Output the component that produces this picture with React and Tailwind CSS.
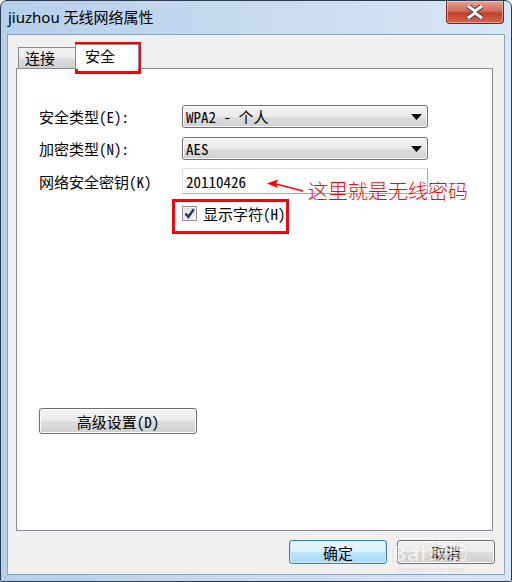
import React from 'react';

const cjk = "font-['Noto_Sans_Mono_CJK_SC','Noto_Sans_CJK_SC',monospace]";
const btnGray =
  'border border-[#707070] rounded-[3px] bg-[linear-gradient(to_bottom,#f2f2f2_0%,#ebebeb_50%,#dddddd_51%,#cfcfcf_100%)] shadow-[inset_0_0_0_1px_#fcfcfc]';

function Dropdown({ value }) {
  return (
    <div className={`w-[246px] h-[23px] flex items-center justify-between pl-[3px] pr-[5px] ${btnGray}`}>
      <span className="text-[15px] leading-none text-black">{value}</span>
      <svg width="11" height="6" viewBox="0 0 11 6">
        <path d="M0 0 H11 L5.5 6 Z" fill="#000" />
      </svg>
    </div>
  );
}

function Row({ label, children }) {
  return (
    <div className="flex items-center">
      <div className="w-[143px] text-[15px] leading-none text-black">{label}</div>
      {children}
    </div>
  );
}

export default function App() {
  return (
    <div className={`relative w-[512px] h-[582px] bg-white ${cjk}`}>
      {/* Window frame */}
      <div className="w-[512px] h-[582px] border border-[#2d3b4e] rounded-t-[7px] rounded-b-[2px] bg-[linear-gradient(to_right,#b6cfea_0%,#c6daef_45%,#d8e6f5_100%)] flex flex-col">
        {/* Title bar */}
        <div className="h-[33px] flex justify-between shrink-0">
          <div className="pl-[7px] pt-[9px] text-[15px] leading-none text-black font-['Noto_Sans','Noto_Sans_CJK_SC',sans-serif]">
            jiuzhou 无线网络属性
          </div>
          <div className="mr-[7px] w-[58px] h-[23px] rounded-b-[4px] border border-t-0 border-[#6b2a22] bg-[linear-gradient(to_bottom,#e8a493_0%,#d46a56_45%,#c0412b_55%,#d8644a_100%)] flex items-center justify-center shadow-[inset_0_0_0_1px_rgba(255,220,210,0.5)]">
            <svg width="20" height="14" viewBox="0 0 20 14">
              <path d="M3 1 L10 6 L17 1 M3 13 L10 8 L17 13" stroke="#3a3a3a" strokeWidth="5" fill="none" strokeLinejoin="round" />
              <path d="M3 1 L10 6 L17 1 M3 13 L10 8 L17 13" stroke="#ffffff" strokeWidth="3" fill="none" strokeLinejoin="round" />
            </svg>
          </div>
        </div>

        {/* Client area */}
        <div className="mx-[6px] h-[541px] border border-[#8da2bb] bg-[#f0f0f0] flex flex-col">
          <div className="ml-[8px] mt-[9px] w-[477px]">
            {/* Tabs */}
            <div className="h-[24px] flex items-end pl-[2px]">
              <div className="w-[58px] h-[21px] border border-b-0 border-[#898c95] bg-[linear-gradient(to_bottom,#f2f2f2_0%,#ebebeb_50%,#dddddd_51%,#cfcfcf_100%)] pl-[6px] pt-[2px] text-[15px] leading-none text-black">
                连接
              </div>
              <div className="w-[64px] h-[25px] -ml-[1px] -mb-px border border-b-0 border-[#898c95] bg-white pl-[9px] pt-[3px] text-[15px] leading-none text-black relative z-10">
                安全
              </div>
            </div>
            {/* Panel */}
            <div className="h-[463px] border border-[#898c95] bg-white pl-[22px] pt-[36px] flex flex-col">
              <Row label="安全类型(E):">
                <Dropdown value="WPA2 - 个人" />
              </Row>
              <div className="mt-[9px]">
                <Row label="加密类型(N):">
                  <Dropdown value="AES" />
                </Row>
              </div>
              <div className="mt-[8px]">
                <Row label="网络安全密钥(K)">
                  <div className="w-[246px] h-[26px] border border-[#abadb3] border-t-[#dcdcdc] border-l-[#e2e3ea] bg-white pl-[3px] flex items-center text-[15px] leading-none text-black">
                    20110426
                  </div>
                </Row>
              </div>
              <div className="mt-[12px] pl-[143px] flex items-center gap-[6px]">
                <div className="w-[15px] h-[15px] border border-[#8f8f8f] bg-[linear-gradient(to_bottom,#dcdcdc,#f6f6f6)] flex items-center justify-center shadow-[inset_0_0_0_1px_#f4f4f4]">
                  <svg width="11" height="11" viewBox="0 0 11 11">
                    <path d="M1.5 5.5 L4.3 9 L9.8 1.2" stroke="#1c3a70" strokeWidth="2.4" fill="none" />
                  </svg>
                </div>
                <span className="text-[15px] leading-none text-black">显示字符(H)</span>
              </div>
              <div className={`mt-[187px] w-[158px] h-[26px] flex items-center justify-center text-[15px] leading-none text-black ${btnGray}`}>
                高级设置(D)
              </div>
            </div>
          </div>
          {/* Bottom buttons */}
          <div className="mt-[9px] pr-[9px] flex justify-end gap-[10px]">
            <div className="w-[98px] h-[24px] rounded-[3px] border border-[#3c7fb1] bg-[linear-gradient(to_bottom,#eaf6fd_0%,#d9f0fc_50%,#bee6fd_51%,#a7d9f5_100%)] shadow-[inset_0_0_0_1px_#c8eaf8] flex items-center justify-center text-[15px] leading-none text-black">
              确定
            </div>
            <div className={`w-[98px] h-[24px] flex items-center justify-center text-[15px] leading-none text-black ${btnGray}`}>
              取消
            </div>
          </div>
        </div>
      </div>

      {/* Red annotation boxes */}
      <div className="absolute left-[75px] top-[42px] w-[66px] h-[32px] border-[3px] border-[#ff0000]" />
      <div className="absolute left-[172px] top-[199px] w-[117px] h-[35px] border-[3px] border-[#ff0000]" />

      {/* Arrow + note */}
      <svg className="absolute left-[262px] top-[176px]" width="46" height="20" viewBox="0 0 46 20">
        <path d="M5 7.5 L16 3.5 L14 8 L16 12 Z" fill="#ff0000" />
        <path d="M14 8 L41 15" stroke="#ff0000" strokeWidth="1.3" fill="none" />
      </svg>
      <div className="absolute left-[308px] top-[181px] text-[20px] leading-none text-[#ff0000] font-['Noto_Sans_CJK_SC',sans-serif] font-light">
        这里就是无线密码
      </div>

      {/* Watermark */}
      <div className="absolute left-[392px] top-[541px] flex items-end gap-[2px] opacity-50 font-['Noto_Sans','Noto_Sans_CJK_SC',sans-serif] [text-shadow:0_0_1px_#9a9a9a,0_0_1px_#9a9a9a]">
        <span className="text-[22px] leading-none font-bold text-white">Bai</span>
        <span className="text-[20px] leading-none font-bold text-white">经验</span>
      </div>
      <div className="absolute left-[396px] top-[565px] text-[9px] leading-none text-[#d8d8d8] opacity-70 font-['Liberation_Serif',serif]">
        jingyan.baidu.com
      </div>
    </div>
  );
}
